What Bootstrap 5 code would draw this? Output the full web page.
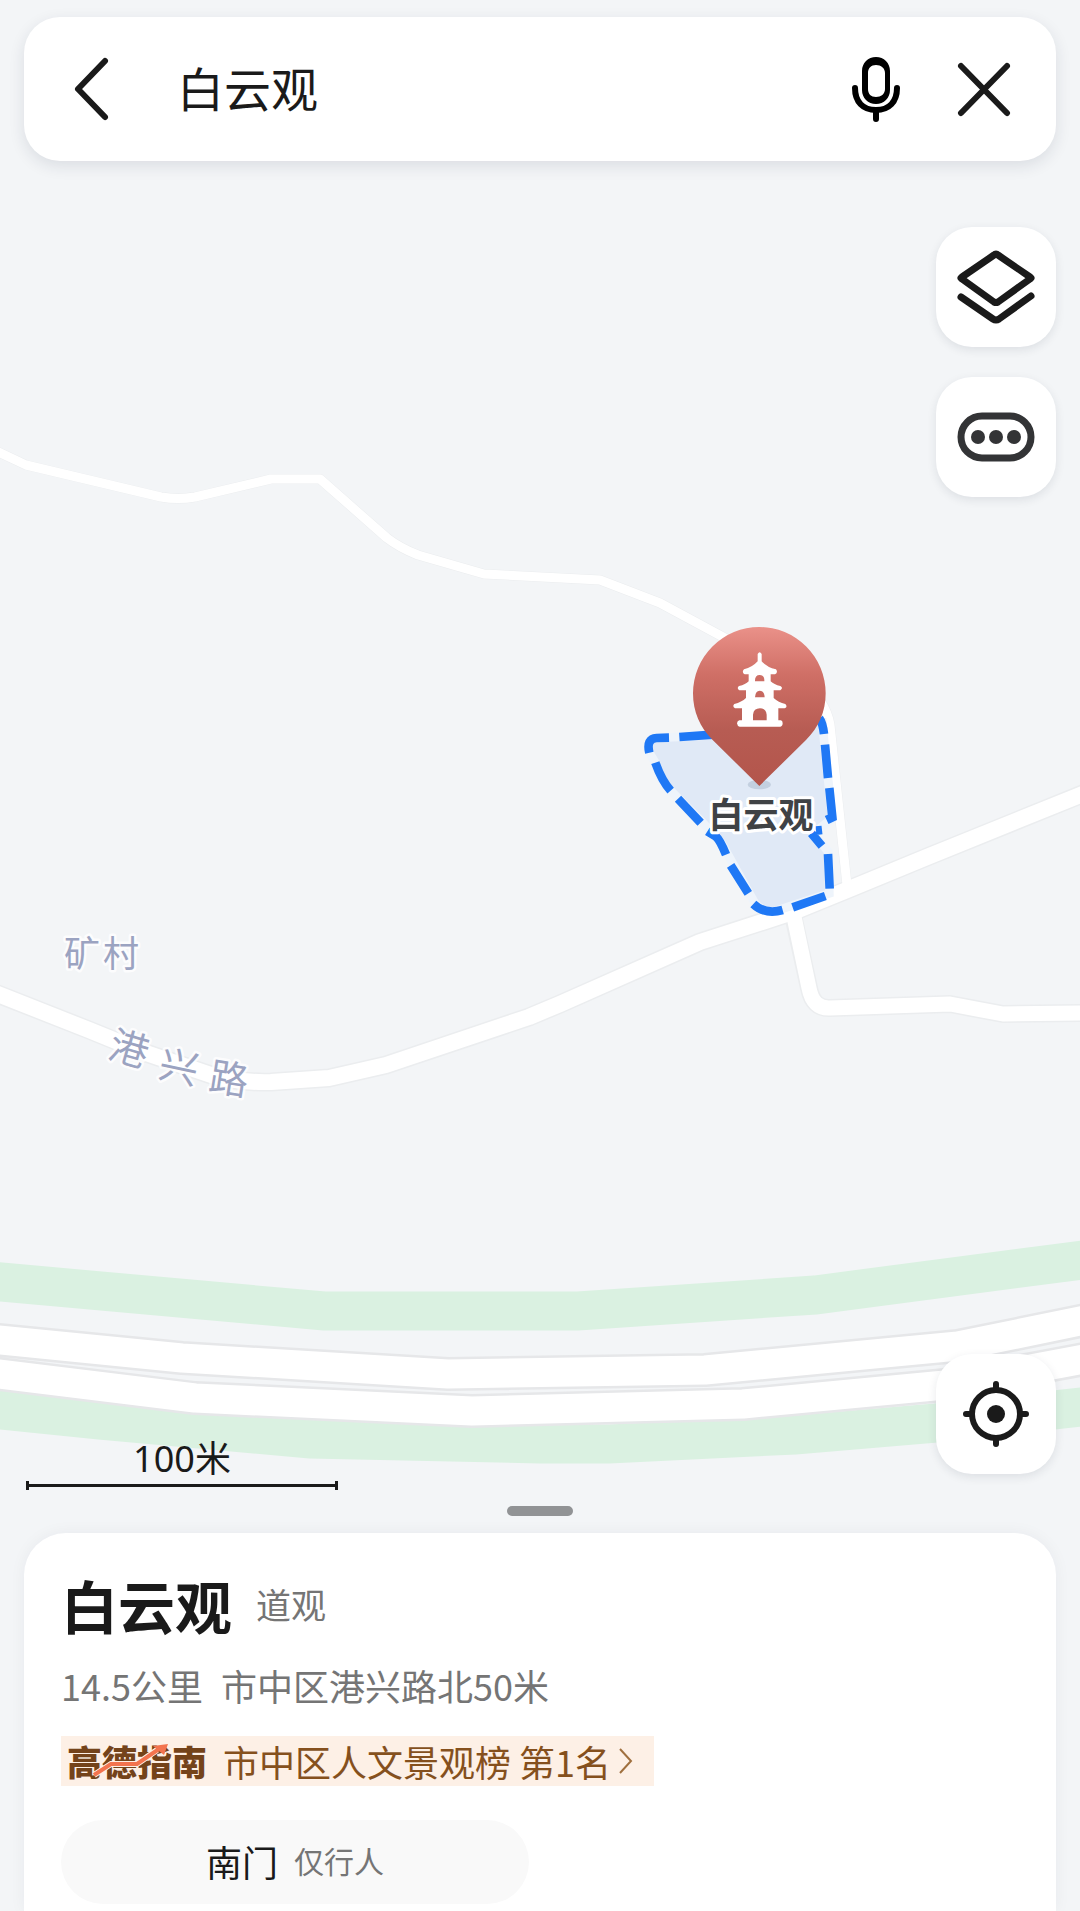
<!DOCTYPE html>
<html lang="zh-CN">
<head>
<meta charset="utf-8">
<meta name="viewport" content="width=device-width, initial-scale=1">
<title>白云观</title>
<link href="https://cdn.jsdelivr.net/npm/bootstrap@5.3.0/dist/css/bootstrap.min.css" rel="stylesheet">
<style>
  :root { --ink: #1a1a1a; --soft: #757575; --land: #f3f5f7; --edge: 24px; }
  body { background: var(--land); color: var(--ink); font-family: "Noto Sans CJK SC", "Noto Sans", sans-serif; }
  .map-canvas { z-index: 0; }
  .map-canvas text { font-family: "Noto Sans CJK SC", sans-serif; }
  .place-label { fill: #9ba3c1; stroke: #fff; stroke-opacity: .8; stroke-width: 5px; paint-order: stroke; stroke-linejoin: round; font-size: 36px; font-weight: 400; text-anchor: middle; }
  .road-label { font-size: 39px; }
  .poi-label { fill: #3f4245; stroke: #fff; stroke-width: 6px; paint-order: stroke; stroke-linejoin: round; font-size: 35px; font-weight: 700; text-anchor: middle; }
  .overlay-ui { z-index: 1; padding: 17px var(--edge) 0; }
  .search-bar { height: 144px; padding: 0 45px; border-radius: 36px; box-shadow: 0 5px 16px rgba(30, 40, 60, .11); }
  .search-input { margin-left: 54px; padding: 0 0 5px; font-size: 47px; line-height: 60px; color: var(--ink); }
  .search-input:focus { box-shadow: none; }
  .icon-btn { line-height: 0; }
  .icon-btn svg { width: 54px; height: 72px; }
  .search-actions { gap: 54px; }
  .tool-stack { margin-top: 66px; gap: 30px; }
  .tool-btn { width: 120px; height: 120px; border-radius: 36px; box-shadow: 0 3px 10px rgba(30, 40, 60, .1); }
  .tool-btn svg { width: 84px; height: 84px; }
  .map-scale { width: 312px; margin-left: 2px; font-family: "Noto Sans", "Noto Sans CJK SC", sans-serif; font-size: 36px; line-height: 44px; }
  .scale-rule { height: 9px; border: solid var(--ink); border-width: 0 3px; }
  .scale-rule span { height: 3px; background: var(--ink); }
  .sheet-grip { width: 66px; height: 10px; border-radius: 5px; background: #919395; margin: 16px auto 17px; }
  .place-sheet { z-index: 1; margin: 0 var(--edge); padding: 33px 37px 7px; border-radius: 42px 42px 0 0; box-shadow: 0 0 16px rgba(30, 40, 60, .05); }
  .place-name { font-size: 57px; line-height: 76px; font-weight: 700; }
  .place-kind { font-size: 35px; line-height: 52px; color: var(--soft); }
  .place-addr { gap: 18px; font-size: 36px; line-height: 52px; color: var(--soft); margin-top: 17px; }
  .rank-tag { height: 50px; margin-top: 25px; padding: 0 17px 0 6px; background: #fdf0e6; color: #85501d; font-size: 36px; line-height: 46px; }
  .rank-logo { font-size: 35px; font-weight: 900; color: #74431a; }
  .rank-logo svg { left: 24px; top: 6px; width: 80px; height: 35px; }
  .gate-chip { width: 468px; height: 84px; margin-top: 34px; padding: 0 0 3px; border-radius: 42px; background: #f9f9f9; color: var(--ink); font-size: 36px; }
  .gate-note { font-size: 30px; color: var(--soft); }
</style>
</head>
<body>
<div class="position-relative d-flex flex-column min-vh-100 overflow-hidden">

  <svg class="map-canvas position-absolute top-0 start-0 w-100 h-100" viewBox="0 0 1080 1911" preserveAspectRatio="xMidYMax slice" role="img" aria-label="地图">
    <defs>
      <linearGradient id="pinFill" x1="0" y1="0" x2="0" y2="1">
        <stop offset="0" stop-color="#ea9189"/><stop offset=".3" stop-color="#cf6f66"/><stop offset=".65" stop-color="#b75c53"/><stop offset="1" stop-color="#b3554b"/>
      </linearGradient>
    </defs>
    <!-- green belts -->
    <g fill="none" stroke="#daf1e1" stroke-width="39">
      <path d="M-10 1281L324 1311H578L815 1295L1090 1259"/>
      <path d="M-10 1409L100 1420L310 1439L540 1444H609L795 1435L936 1423L1090 1406"/>
    </g>
    <!-- motorway -->
    <g fill="none" stroke-linejoin="round">
      <path stroke="#e6e7e9" stroke-width="34" d="M-10 1339L182 1358L448 1374L705 1370L958 1346L1090 1319M-10 1373L195 1398L472 1411L743 1404L945 1385L1090 1358"/>
      <path stroke="#fff" stroke-width="29" d="M-10 1339L182 1358L448 1374L705 1370L958 1346L1090 1319M-10 1373L195 1398L472 1411L743 1404L945 1385L1090 1358"/>
    </g>
    <!-- local roads: casing, then surface -->
    <g fill="none" stroke-linejoin="round">
      <g stroke="#ebedef">
        <path stroke-width="10" d="M-10 448L26 465L161 497Q178 500 195 497L271 479H320L387 538Q400 548 418 555L484 574L600 580L660 603L723 637L800 680Q826 700 830 725L847 885"/>
        <path stroke-width="19" d="M-10 991L89 1030L143 1052L214 1076Q245 1083 271 1082L329 1078L386 1065L529 1017L560 1004L700 942L793 912L847 890L927 857L1090 791"/>
        <path stroke-width="18" d="M793 915L809 988Q813 1009 830 1008L950 1004L1003 1014L1090 1013"/>
      </g>
      <g stroke="#fff">
        <path stroke-width="9" d="M-10 448L26 465L161 497Q178 500 195 497L271 479H320L387 538Q400 548 418 555L484 574L600 580L660 603L723 637L800 680Q826 700 830 725L847 885"/>
        <path stroke-width="16" d="M-10 991L89 1030L143 1052L214 1076Q245 1083 271 1082L329 1078L386 1065L529 1017L560 1004L700 942L793 912L847 890L927 857L1090 791"/>
        <path stroke-width="15" d="M793 912L809 988Q813 1009 830 1008L950 1004L1003 1014L1090 1013"/>
      </g>
    </g>
    <!-- scenic area outline and pin, on a grid of a third of a pixel -->
    <g transform="translate(560 540) scale(.33333)">
      <path fill="#e0e9f6" d="M265 625Q258 596 290 594L450 586L780 540L795 620L815 835L765 880L805 935L810 1060L640 1115Q610 1116 585 1090L485 910L430 850L320 740Z"/>
      <path fill="none" stroke="#eef4fb" stroke-width="26" d="M450 586L290 594Q258 596 268 638L286 668Q300 722 320 740L430 850L485 910L585 1090Q610 1116 640 1115L808 1060L805 935L760 880L817 835L798 660L786 535"/>
      <g fill="none" stroke="#1f78f5" stroke-width="26">
        <path d="M268 638Q258 596 290 594L327 593M358 591L460 584M778 535Q788 548 792 582M795 614L804 714M808 744L817 832L800 840M786 870L768 872M754 880L786 918M804 942L809 1046M796 1068L698 1102M668 1110Q615 1125 580 1092M565 1060L512 976M498 944Q480 900 468 890L442 874M422 848L354 776M332 752Q305 722 286 668"/>
      </g>
      <ellipse cx="598" cy="734" rx="35" ry="14" fill="#c3d0e0"/>
      <path fill="url(#pinFill)" d="M598 738L458 600C420 563 399 515 399 460A199 199 0 0 1 797 460C797 515 776 563 738 600Z"/>
      <path fill="#fff" fill-rule="evenodd" d="M593 342Q599 332 605 342V364Q622 382 648 388Q655 397 645 403H632V424Q642 434 661 438Q671 444 661 451H641V474Q655 487 676 492Q684 500 674 505H655V541H663Q668 543 668 550Q668 559 661 560H539Q532 559 531 550Q532 542 538 541H546V505H525Q516 499 523 492Q545 486 558 474V451H538Q529 444 537 438Q557 434 566 424V403H554Q544 396 552 388Q577 382 593 364ZM585 424H613Q614 405 599 405Q584 405 585 424ZM585 472H614Q613 452 599 452Q586 452 585 472ZM579 541H620V524Q618 505 600 505Q581 505 579 524Z"/>
    </g>
    <text class="poi-label" x="761" y="828">白云观</text>
    <text class="place-label" x="82 121" y="967">矿村</text>
    <g class="place-label road-label">
      <text transform="translate(129 1049) rotate(16)" y="14">港</text>
      <text transform="translate(179 1067) rotate(12)" y="14">兴</text>
      <text transform="translate(229 1079) rotate(9)" y="14">路</text>
    </g>
  </svg>

  <div class="overlay-ui position-relative flex-grow-1 d-flex flex-column">
    <form class="search-bar bg-white d-flex align-items-center" role="search" onsubmit="return false">
      <button type="button" class="icon-btn btn p-0 border-0" aria-label="返回">
        <svg viewBox="0 0 54 72" fill="none" stroke="#1a1a1a" stroke-width="6" stroke-linecap="round" stroke-linejoin="round"><path d="M36 8L9 36L36 64"/></svg>
      </button>
      <input type="text" class="search-input form-control border-0 bg-transparent flex-grow-1" value="白云观" aria-label="搜索地点">
      <div class="search-actions d-flex">
        <button type="button" class="icon-btn btn p-0 border-0" aria-label="语音搜索">
          <svg viewBox="0 0 54 72" fill="none" stroke="#000" stroke-linecap="round"><path fill="#000" stroke="none" fill-rule="evenodd" d="M27 4C35 4 41 10 41 18V37C41 45 35 51 27 51S13 45 13 37V18C13 10 19 4 27 4ZM27 12C22 12 19 15 19 20V36C19 41 22 44 27 44S36 41 36 36V20C36 15 32 12 27 12Z"/><path stroke-width="6" d="M6 35C6 49 14 57 27 57S48 49 48 35M27 57V66"/></svg>
        </button>
        <button type="button" class="icon-btn btn p-0 border-0" aria-label="清除">
          <svg viewBox="0 0 54 72" fill="none" stroke="#1a1a1a" stroke-width="6" stroke-linecap="round"><path d="M4 13L50 60M50 13L4 60"/></svg>
        </button>
      </div>
    </form>

    <div class="tool-stack d-flex flex-column align-items-end">
      <button type="button" class="tool-btn btn bg-white border-0 p-0" aria-label="图层">
        <svg viewBox="0 0 84 84" fill="none" stroke="#1a1a1a" stroke-width="7" stroke-linecap="round" stroke-linejoin="round"><path d="M40 10Q42 8 44 10L76 32L77 33L76 34L44 57Q42 58 40 57L8 34L7 33L8 32ZM7 52L39 74Q42 76 45 74L77 51"/></svg>
      </button>
      <button type="button" class="tool-btn btn bg-white border-0 p-0" aria-label="更多">
        <svg viewBox="0 0 84 84"><rect x="7" y="21" width="70" height="42" rx="21" fill="none" stroke="#333436" stroke-width="7"/><g fill="#333436"><circle cx="24" cy="42" r="7"/><circle cx="42" cy="42" r="7"/><circle cx="60" cy="42" r="7"/></g></svg>
      </button>
    </div>

    <div class="mt-auto d-flex justify-content-between align-items-end">
      <div class="map-scale text-center">
        <div>100米</div>
        <div class="scale-rule d-flex align-items-center"><span class="w-100"></span></div>
      </div>
      <button type="button" class="tool-btn btn bg-white border-0 p-0 mb-3" aria-label="定位">
        <svg viewBox="0 0 84 84" fill="none" stroke="#1a1a1a" stroke-width="6" stroke-linecap="round"><circle cx="42" cy="42" r="24"/><circle cx="42" cy="42" r="9" fill="#1a1a1a" stroke="none"/><path d="M42 18V12M42 66V72M18 42H12M66 42H72"/></svg>
      </button>
    </div>
    <div class="sheet-grip"></div>
  </div>

  <section class="place-sheet position-relative bg-white d-flex flex-column align-items-start">
    <div class="d-flex align-items-center">
      <h1 class="place-name m-0">白云观</h1>
      <span class="place-kind ms-4">道观</span>
    </div>
    <div class="place-addr d-flex"><span>14.5公里</span><span>市中区港兴路北50米</span></div>
    <a href="#" class="rank-tag d-flex align-items-center text-decoration-none">
      <span class="rank-logo position-relative me-3">高德指南
        <svg class="position-absolute" viewBox="0 0 80 35" fill="none"><path stroke="#fdf0e6" stroke-width="6" d="M3 31L20 20H46L66 6"/><path stroke="#f3744f" stroke-width="4" d="M3 31L20 20H46L68 5"/><path fill="#f3744f" d="M62 2L77 0L73 11Z"/></svg>
      </span>
      <span>市中区人文景观榜 第1名</span>
      <svg class="ms-2 me-1" width="14" height="26" viewBox="0 0 14 26" fill="none" stroke="#a0703f" stroke-width="2"><path d="M1 1L12 13L1 25"/></svg>
    </a>
    <button type="button" class="gate-chip btn border-0 d-flex align-items-center justify-content-center">
      <span>南门</span><span class="gate-note ms-3">仅行人</span>
    </button>
  </section>
</div>
<script src="https://cdn.jsdelivr.net/npm/bootstrap@5.3.0/dist/js/bootstrap.bundle.min.js"></script>
</body>
</html>
